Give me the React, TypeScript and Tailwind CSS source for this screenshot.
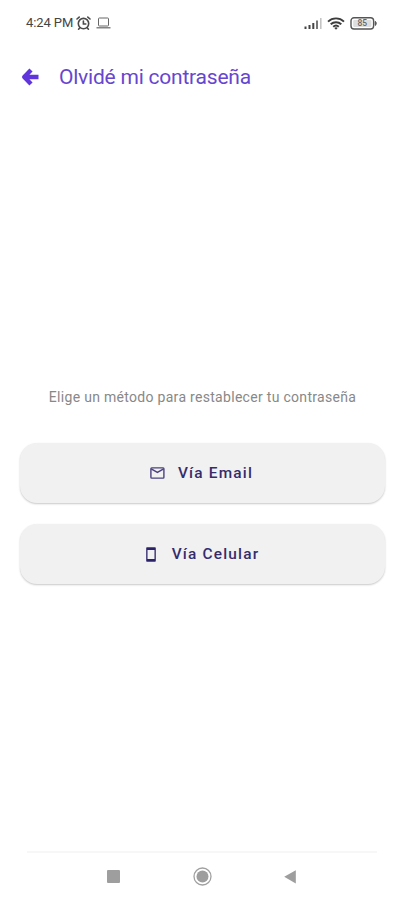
import type { ReactNode } from 'react';

function ArrowIcon() {
  return (
    <svg width="18" height="18" viewBox="0 0 18 18" fill="none" stroke="currentColor" strokeWidth="4.4" strokeLinejoin="round">
      <path d="M10 2 3.2 9l6.8 7M4 9h13.5" />
    </svg>
  );
}

function AlarmIcon() {
  return (
    <svg width="15" height="15" viewBox="0 0 15 15" fill="none" stroke="#4a4a4a" strokeWidth="1.6" strokeLinecap="round">
      <circle cx="7.5" cy="7.6" r="5.2" />
      <path d="M1 3 3.2 1.1M14 3 11.8 1.1M7.4 5V8H9.8M3.6 12 2.6 13.2M11.4 12l1 1.2" />
    </svg>
  );
}

function LaptopIcon() {
  return (
    <svg width="15" height="12" viewBox="0 0 15 12" fill="none" stroke="#666">
      <rect x="2.5" y="1" width="10" height="8" rx="0.8" />
      <path d="M0.5 10.8H14.5" strokeWidth="1.2" />
    </svg>
  );
}

function SignalIcon() {
  return (
    <svg width="19" height="13" viewBox="0 0 19 13">
      <path d="M0.5 9.5h2V12h-2zM4.5 8h2v4h-2zM8.3 6h2v6h-2z" fill="#444" />
      <path d="M12 3.5h2V12h-2z" fill="#777" />
      <path d="M16 1h1.6v11H16z" fill="#c4c4c4" />
    </svg>
  );
}

function WifiIcon() {
  return (
    <svg width="18" height="13" viewBox="0 0 18 13" fill="none" stroke="#3c3c3c" strokeWidth="1.9">
      <path d="M1 4.6C5.6 0.3 12.4 0.3 17 4.6M3.7 7.3c3-2.8 7.6-2.8 10.6 0M6.2 9.7c1.6-1.5 4-1.5 5.6 0" />
      <path d="M7.3 10.9 9 12.7l1.7-1.8c-1-.8-2.4-.8-3.4 0z" fill="#3c3c3c" stroke="none" />
    </svg>
  );
}

function BatteryIcon() {
  return (
    <svg width="28" height="13" viewBox="0 0 28 13">
      <rect x="1" y="0.8" width="22.6" height="11.2" rx="3" fill="none" stroke="#555" strokeWidth="1.4" />
      <path d="M25.2 4.4c1.4.4 1.4 3.6 0 4z" fill="#555" stroke="#555" />
      <rect x="3.2" y="3" width="18.2" height="7" rx="1" fill="#dedede" />
      <text x="12.3" y="9.4" textAnchor="middle" fontSize="8.5" fontWeight="500" fill="#666">85</text>
    </svg>
  );
}

function MailIcon() {
  return (
    <svg width="15" height="12" viewBox="0 0 15 12" fill="none" stroke="#4a427f" strokeWidth="1.4">
      <rect x="0.9" y="0.9" width="13" height="10.2" rx="0.8" />
      <path d="M1.2 1.8 7.4 5.4l6.2-3.6" />
    </svg>
  );
}

function PhoneIcon() {
  return (
    <svg width="10" height="15" viewBox="0 0 10 15">
      <path fillRule="evenodd" fill="#2c2269" d="M1.2.3h7.6c.6 0 1 .4 1 1v12.4c0 .6-.4 1-1 1H1.2c-.6 0-1-.4-1-1V1.3c0-.6.4-1 1-1zM1.5 2.9v9.2h7V2.9z" />
    </svg>
  );
}

function MethodButton({ icon, label }: { icon: ReactNode; label: string }) {
  return (
    <button className="flex h-[60px] w-full items-center justify-center rounded-[17px] bg-[#f1f1f1] pr-[2px] text-[15.4px] font-medium tracking-[1.2px] text-[#352c6c] shadow-[0_1px_2px_rgba(0,0,0,0.22)]">
      <span className="flex w-[15px] justify-center">{icon}</span>
      <span className="ml-[13px] pt-[2px]">{label}</span>
    </button>
  );
}

export default function App() {
  return (
    <div className="flex h-[900px] w-[404px] flex-col overflow-hidden bg-white font-['Roboto',sans-serif]">
      <div className="flex h-[46px] items-center justify-between pr-[26px] pl-[26px]">
        <div className="flex items-center">
          <span className="w-[50px] text-[13px] tracking-[-0.1px] whitespace-nowrap text-[#444]">4:24 PM</span>
          <AlarmIcon />
          <span className="ml-[5px]"><LaptopIcon /></span>
        </div>
        <div className="flex items-center">
          <SignalIcon />
          <span className="ml-[4px]"><WifiIcon /></span>
          <span className="ml-[5px]"><BatteryIcon /></span>
        </div>
      </div>

      <header className="flex h-[62px] items-center pl-[21px]">
        <button aria-label="Volver" className="text-[#6036dc]"><ArrowIcon /></button>
        <h1 className="mt-[2px] ml-[20px] text-[21px] tracking-[-0.22px] whitespace-nowrap text-[#6746cf]">Olvidé mi contraseña</h1>
      </header>

      <main className="flex flex-1 flex-col pt-[279px] pr-[19px] pl-[20px]">
        <p className="text-center text-[14px] leading-[20px] tracking-[0.3px] whitespace-nowrap text-[#888]">Elige un método para restablecer tu contraseña</p>
        <div className="mt-[36px] flex flex-col gap-[21px]">
          <MethodButton icon={<MailIcon />} label="Vía Email" />
          <MethodButton icon={<PhoneIcon />} label="Vía Celular" />
        </div>
      </main>

      <nav className="mx-[27px] flex h-[49px] items-center border-t-2 border-[#f7f7f7] pl-[80px]">
        <span className="h-[13px] w-[13px] rounded-[1px] bg-[#9e9e9e]" />
        <svg className="ml-[73px]" width="19" height="19" viewBox="0 0 19 19">
          <circle cx="9.5" cy="9.5" r="8.5" fill="none" stroke="#a0a0a0" strokeWidth="1.3" />
          <circle cx="9.5" cy="9.5" r="6" fill="#9e9e9e" />
        </svg>
        <svg className="ml-[72px]" width="12" height="14" viewBox="0 0 12 14">
          <path d="M11.8.2v13.3L.2 6.8z" fill="#9e9e9e" />
        </svg>
      </nav>
    </div>
  );
}
